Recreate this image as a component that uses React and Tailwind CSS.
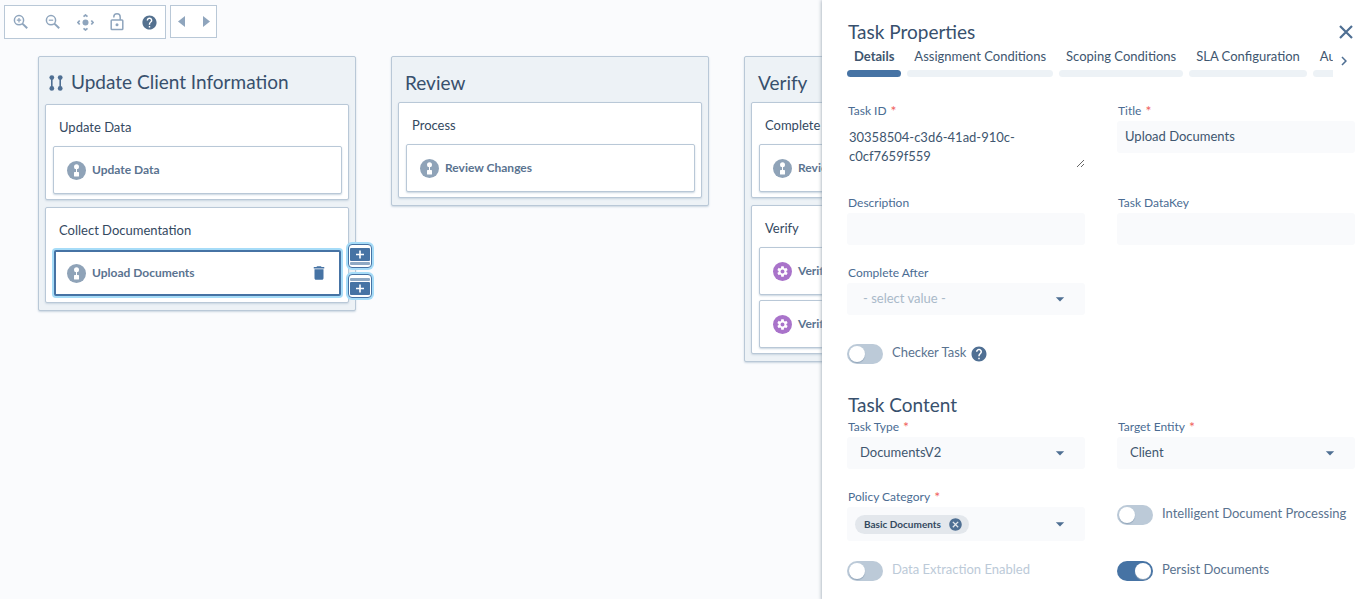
import React, { useState } from "react";
import clsx from "clsx";
import { MdHelp, MdCancel, MdDelete, MdSettings, MdChevronRight, MdArrowDropDown } from "react-icons/md";

const columns = [
  {
    title: "Update Client Information",
    parallel: true,
    steps: [
      { title: "Update Data", tasks: [{ name: "Update Data", type: "manual" }] },
      { title: "Collect Documentation", tasks: [{ name: "Upload Documents", type: "manual", selected: true }] },
    ],
  },
  {
    title: "Review",
    steps: [{ title: "Process", tasks: [{ name: "Review Changes", type: "manual" }] }],
  },
  {
    title: "Verify",
    steps: [
      { title: "Complete", tasks: [{ name: "Review", type: "manual" }] },
      {
        title: "Verify",
        tasks: [
          { name: "Verify Client", type: "auto" },
          { name: "Verify Documents", type: "auto" },
        ],
      },
    ],
  },
];

const tabs = ["Details", "Assignment Conditions", "Scoping Conditions", "SLA Configuration", "Audit"];

const ZoomIcon = ({ plus }) => (
  <svg width="16" height="16" viewBox="0 0 16 16" fill="none" stroke="currentColor">
    <circle cx="6" cy="6.2" r="4.6" strokeWidth="1.5" />
    <path d="M9.4 9.6l4.8 4.6" strokeWidth="2" />
    <path d={plus ? "M3.8 6.2h4.4M6 4v4.4" : "M3.8 6.2h4.4"} strokeWidth="1.2" />
  </svg>
);

const CenterIcon = () => (
  <svg width="17" height="17" viewBox="0 0 17 17" fill="none" stroke="currentColor" strokeWidth="1.7">
    <circle cx="8.5" cy="8.5" r="3" fill="currentColor" stroke="none" />
    <path d="M6.5 2.7l2-1.7 2 1.7M6.5 14.3l2 1.7 2-1.7M2.7 6.5L1 8.5l1.7 2M14.3 6.5l1.7 2-1.7 2" />
  </svg>
);

const UnlockIcon = () => (
  <svg width="14" height="18" viewBox="0 0 14 18" fill="none" stroke="currentColor" strokeWidth="1.5">
    <rect x="1.2" y="7" width="11.6" height="9.6" rx="0.8" />
    <path d="M3.8 4.6V4a3.2 3.2 0 0 1 6.4 0v3" />
    <circle cx="7" cy="11.7" r="1.5" fill="currentColor" stroke="none" />
  </svg>
);

const Triangle = ({ left }) => (
  <svg width="7" height="11" viewBox="0 0 7 11" fill="currentColor">
    <path d={left ? "M7 0v11L0 5.5z" : "M0 0v11l7-5.5z"} />
  </svg>
);

const CloseIcon = () => (
  <svg width="14" height="14" viewBox="0 0 14 14" fill="none" stroke="currentColor" strokeWidth="2.2">
    <path d="M1 1l12 12M13 1L1 13" />
  </svg>
);

const ParallelIcon = () => (
  <svg width="14" height="16" viewBox="0 0 14 16" fill="currentColor" className="text-[#4f6f93]">
    <circle cx="2.8" cy="2.6" r="2.4" />
    <circle cx="2.8" cy="13.4" r="2.4" />
    <path d="M2 2h1.6v12H2zM10.4 2H12v12h-1.6z" />
    <circle cx="11.2" cy="2.6" r="2.4" />
    <circle cx="11.2" cy="13.4" r="2.4" />
  </svg>
);

const TaskIcon = ({ type }) =>
  type === "auto" ? (
    <span className="flex size-[19px] shrink-0 items-center justify-center rounded-full bg-[#a973ca] text-white">
      <MdSettings size={13} />
    </span>
  ) : (
    <svg width="19" height="19" viewBox="0 0 19 19" className="shrink-0">
      <circle cx="9.5" cy="9.5" r="9.5" fill="#8fa3b8" />
      <circle cx="9.5" cy="5.8" r="2.5" fill="#fff" />
      <path d="M9 7h1v6H9z" fill="#fff" />
      <rect x="7" y="11" width="5" height="4.6" rx="0.6" fill="#fff" />
    </svg>
  );

const AddIcon = ({ below }) => (
  <svg width="20" height="19" viewBox="0 0 20 19" className="shrink-0">
    <rect x="0" y={below ? 5 : 1} width="20" height="13" rx="1" fill="#4673a4" />
    <rect x="0" y={below ? 1 : 15} width="20" height="3" rx="1" fill="#8fa9c4" />
    <path d={below ? "M10 7.5v8M6 11.5h8" : "M10 3.5v8M6 7.5h8"} stroke="#fff" strokeWidth="1.6" />
  </svg>
);

const addButton =
  "flex h-6 w-6 items-center justify-center rounded-[4px] border border-[#4673a4] bg-white shadow-[0_0_0_2px_#a6dcf8]";

const Task = ({ task }) => (
  <div
    className={clsx(
      "relative flex items-center rounded-[2px] bg-white",
      task.selected
        ? "m-px h-[46px] border-2 border-[#4673a4] px-[11px] shadow-[0_0_0_2px_#a6dcf8]"
        : "h-12 border border-[#b9c8d7] px-[13px] shadow-[0_1px_2px_#c9d5e0]"
    )}
  >
    <TaskIcon type={task.type} />
    <span className="ml-1.5 text-xs font-bold whitespace-nowrap text-[#5a7390]">{task.name}</span>
    {task.selected && (
      <>
        <button aria-label="Delete task" className="ml-auto text-[#4673a4]">
          <MdDelete size={18} />
        </button>
        <div className="absolute -top-2 left-full ml-[9px] flex flex-col gap-1.5">
          <button aria-label="Add task above" className={addButton}>
            <AddIcon />
          </button>
          <button aria-label="Add task below" className={addButton}>
            <AddIcon below />
          </button>
        </div>
      </>
    )}
  </div>
);

const Column = ({ column }) => (
  <section className="w-[318px] shrink-0 rounded-[2px] border border-[#b9c8d7] bg-[#edf2f6] px-1.5 pb-[7px] shadow-[0_1px_2px_#c9d5e0]">
    <h2
      className={clsx(
        "flex items-center text-[19px] text-[#38506d]",
        column.parallel ? "h-[47px] gap-2 px-1 pt-1" : "h-[45px] px-[7px] pt-2"
      )}
    >
      {column.parallel && <ParallelIcon />}
      {column.title}
    </h2>
    <div className="flex flex-col gap-[7px]">
      {column.steps.map((step) => (
        <div
          key={step.title}
          className="rounded-[2px] border border-[#b9c8d7] bg-white pr-1.5 pb-[5px] pl-[7px] shadow-[0_1px_2px_#c9d5e0]"
        >
          <h3 className="flex h-[41px] items-center px-1.5 pt-1 text-[13px] text-[#34495f]">{step.title}</h3>
          <div className="flex flex-col gap-[5px]">
            {step.tasks.map((task) => (
              <Task key={task.name} task={task} />
            ))}
          </div>
        </div>
      ))}
    </div>
  </section>
);

const toolButton = "flex w-8 items-center justify-center text-[#8fa5bd]";

const Toolbar = () => (
  <div className="flex items-start gap-1">
    <div className="flex h-[34px] border border-[#b9c8d7] bg-white">
      <button aria-label="Zoom in" className={toolButton}><ZoomIcon plus /></button>
      <button aria-label="Zoom out" className={toolButton}><ZoomIcon /></button>
      <button aria-label="Center" className={toolButton}><CenterIcon /></button>
      <button aria-label="Unlock" className={toolButton}><UnlockIcon /></button>
      <button aria-label="Help" className="flex w-8 items-center justify-center text-[#54718f]">
        <MdHelp size={17} />
      </button>
    </div>
    <div className="flex h-[33px] gap-[5px] border border-[#b9c8d7] bg-white text-[#8fa5bd]">
      <button aria-label="Undo" className="flex w-5 items-center justify-center"><Triangle left /></button>
      <button aria-label="Redo" className="flex w-5 items-center justify-center"><Triangle /></button>
    </div>
  </div>
);

const Label = ({ children, required, htmlFor }) => (
  <label htmlFor={htmlFor} className="flex h-[18px] gap-1 pl-px text-xs leading-4 text-[#4a6c93]">
    {children}
    {required && <span className="text-sm leading-4 text-[#f0625d]">*</span>}
  </label>
);

const TextField = ({ id, label, required, value = "" }) => (
  <div>
    <Label htmlFor={id} required={required}>{label}</Label>
    <input
      id={id}
      defaultValue={value}
      className="block h-8 w-full rounded-[3px] bg-[#f9fafc] px-2 pb-0.5 text-[13px] text-[#40566f] outline-none"
    />
  </div>
);

const SelectField = ({ id, label, required, options, placeholder }) => (
  <div>
    <Label htmlFor={id} required={required}>{label}</Label>
    <div className="relative">
      <select
        id={id}
        className={clsx(
          "block h-8 w-full appearance-none rounded-[3px] bg-[#f9fafc] text-[13px] outline-none",
          placeholder ? "px-4 text-[#a9b9c9]" : "px-[13px] text-[#40566f]"
        )}
      >
        {placeholder && <option>{placeholder}</option>}
        {options.map((option) => (
          <option key={option}>{option}</option>
        ))}
      </select>
      <MdArrowDropDown size={20} className="pointer-events-none absolute top-1.5 right-[15px] text-[#4f6f93]" />
    </div>
  </div>
);

const Toggle = ({ id, label, checked = false, disabled, children }) => {
  const [on, setOn] = useState(checked);

  return (
    <div className="flex h-5 items-center">
      <input
        id={id}
        type="checkbox"
        checked={on}
        disabled={disabled}
        onChange={() => setOn(!on)}
        className="flex h-5 w-9 shrink-0 appearance-none items-center rounded-full bg-[#bccad8] px-0.5 before:size-4 before:rounded-full before:bg-white before:shadow-[0_1px_1px_#8fa3b8] checked:justify-end checked:bg-[#4673a4]"
      />
      <label
        htmlFor={id}
        className={clsx("ml-[9px] pb-[3px] text-[13px] whitespace-nowrap", disabled ? "text-[#bccad8]" : "text-[#5a7390]")}
      >
        {label}
      </label>
      {children}
    </div>
  );
};

const TaskProperties = () => {
  const [activeTab, setActiveTab] = useState("Details");

  return (
    <aside className="z-10 w-2/5 shrink-0 bg-white pt-5 pr-[15px] pb-5 pl-[25px] shadow-[0_0_4px_#8d9aa8]">
      <div className="flex h-6 items-center justify-between pr-0.5 pl-px">
        <h2 className="text-[19px] leading-6 text-[#38506d]">Task Properties</h2>
        <button aria-label="Close" className="text-[#4f6f93]">
          <CloseIcon />
        </button>
      </div>

      <div className="flex">
        <div role="tablist" className="flex min-w-0 flex-1 gap-1.5 overflow-hidden">
          {tabs.map((tab) => (
            <button
              key={tab}
              role="tab"
              aria-selected={tab === activeTab}
              onClick={() => setActiveTab(tab)}
              className="shrink-0 text-[13px] text-[#40566f]"
            >
              <span className={clsx("block h-[26px] px-[7px] leading-6", tab === activeTab && "font-bold")}>{tab}</span>
              <span className={clsx("block h-[7px] rounded", tab === activeTab ? "bg-[#4673a4]" : "bg-[#edf2f6]")} />
            </button>
          ))}
        </div>
        <button aria-label="More tabs" className="flex w-[22px] items-center justify-center text-[#4f6f93]">
          <MdChevronRight size={18} />
        </button>
      </div>

      <div className="mt-[26px] grid grid-cols-2 gap-x-8 gap-y-5">
        <div>
          <Label htmlFor="task-id" required>Task ID</Label>
          <textarea
            id="task-id"
            defaultValue="30358504-c3d6-41ad-910c-c0cf7659f559"
            className="mb-[7px] block h-[47px] w-full overflow-hidden pt-[7px] pr-12 pl-0.5 text-[13px] leading-[19px] text-[#40566f] outline-none"
          />
        </div>
        <TextField id="title" label="Title" required value="Upload Documents" />
        <TextField id="description" label="Description" />
        <TextField id="data-key" label="Task DataKey" />
        <SelectField id="complete-after" label="Complete After" placeholder="- select value -" options={["Update Data"]} />
      </div>

      <div className="mt-[29px]">
        <Toggle id="checker" label="Checker Task">
          <MdHelp size={18} className="ml-1 text-[#4f6f93]" />
        </Toggle>
      </div>

      <h2 className="mt-[27px] h-7 pl-px text-[19px] leading-7 text-[#38506d]">Task Content</h2>
      <div className="grid grid-cols-2 gap-x-8 gap-y-5">
        <SelectField id="task-type" label="Task Type" required options={["DocumentsV2"]} />
        <SelectField id="target-entity" label="Target Entity" required options={["Client"]} />
        <div>
          <Label htmlFor="policy-category" required>Policy Category</Label>
          <div className="flex h-[34px] items-center rounded-[3px] bg-[#f9fafc] pr-[15px] pl-2">
            <span className="flex h-[19px] items-center rounded-full bg-[#e3e7ec] pr-1.5 pl-[9px] text-[10px] font-bold text-[#34495f]">
              Basic Documents
              <button aria-label="Remove Basic Documents" className="ml-[7px] text-[#4f6f93]">
                <MdCancel size={15} />
              </button>
            </span>
            <button id="policy-category" aria-label="Choose policy category" className="ml-auto text-[#4f6f93]">
              <MdArrowDropDown size={20} />
            </button>
          </div>
        </div>
        <div className="flex items-center">
          <Toggle id="idp" label="Intelligent Document Processing" />
        </div>
        <Toggle id="extraction" label="Data Extraction Enabled" disabled />
        <Toggle id="persist" label="Persist Documents" checked />
      </div>
    </aside>
  );
};

export default function App() {
  return (
    <div className="flex min-h-screen bg-[#fafbfd] font-[Lato,sans-serif]">
      <main className="min-w-0 flex-1 overflow-hidden pt-[5px] pl-1">
        <Toolbar />
        <div className="mt-[17px] flex items-start gap-[35px] pb-6 pl-[34px]">
          {columns.map((column) => (
            <Column key={column.title} column={column} />
          ))}
        </div>
      </main>
      <TaskProperties />
    </div>
  );
}
